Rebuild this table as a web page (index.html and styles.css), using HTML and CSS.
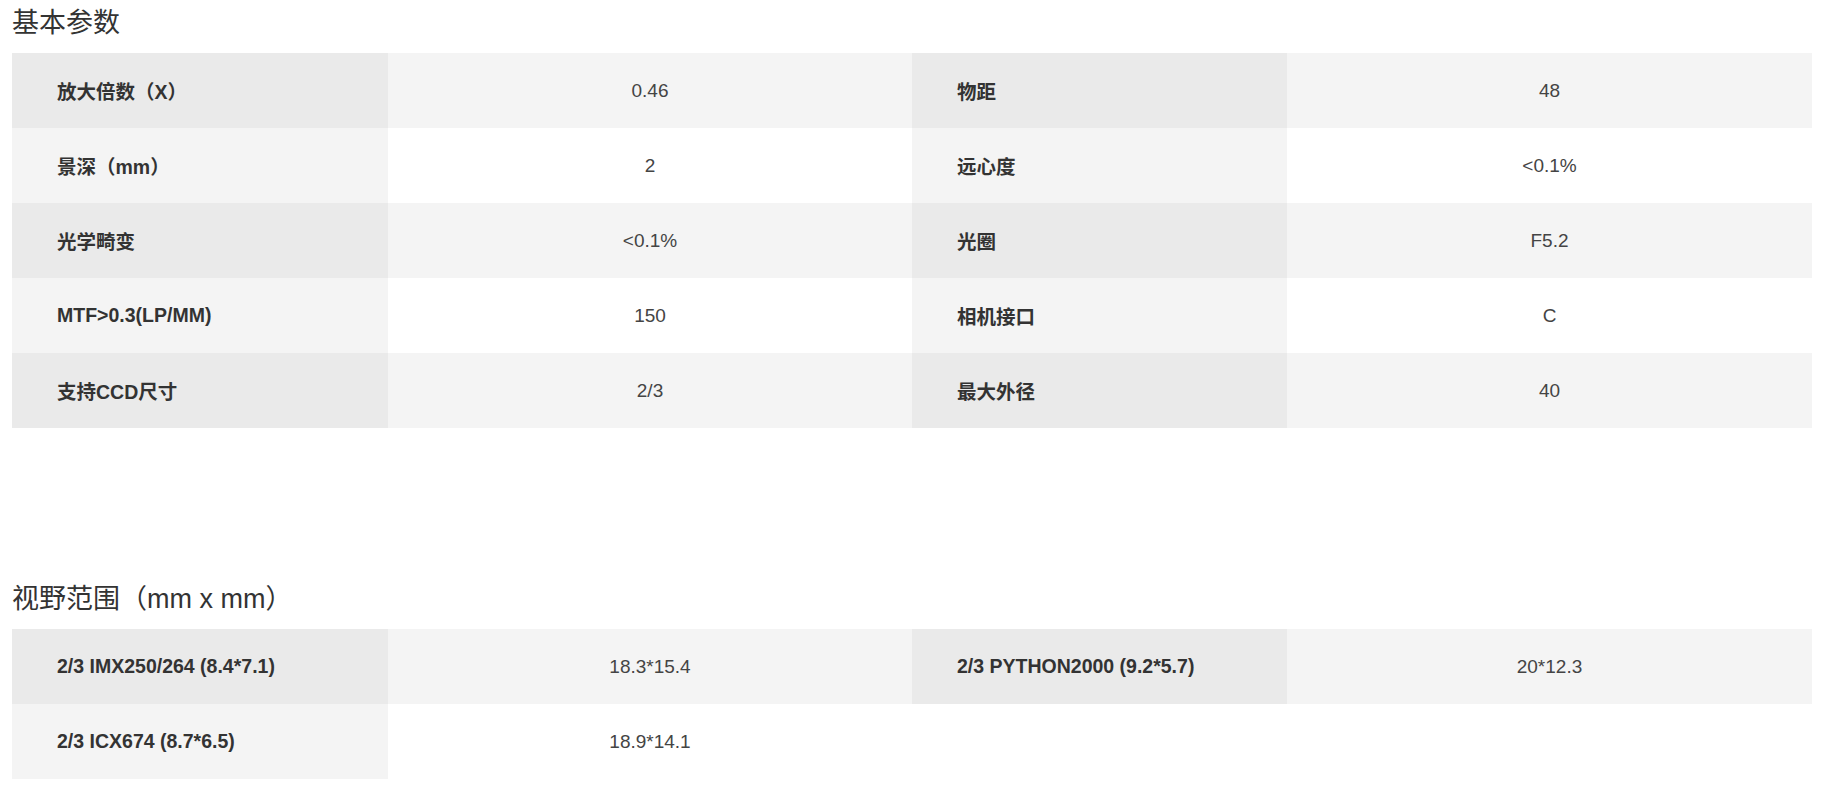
FILE: index.html
```html
<!DOCTYPE html>
<html lang="zh-CN">
<head>
<meta charset="utf-8">
<title>基本参数</title>
<link rel="stylesheet" href="styles.css">
</head>
<body>
<div class="page">
  <section class="block">
    <h2 class="block-title">基本参数</h2>
    <table class="spec">
      <colgroup><col class="c-label"><col class="c-value"><col class="c-label2"><col class="c-value2"></colgroup>
      <tbody>
        <tr><th>放大倍数（X）</th><td>0.46</td><th>物距</th><td>48</td></tr>
        <tr><th>景深（mm）</th><td>2</td><th>远心度</th><td>&lt;0.1%</td></tr>
        <tr><th>光学畸变</th><td>&lt;0.1%</td><th>光圈</th><td>F5.2</td></tr>
        <tr><th>MTF&gt;0.3(LP/MM)</th><td>150</td><th>相机接口</th><td>C</td></tr>
        <tr><th>支持CCD尺寸</th><td>2/3</td><th>最大外径</th><td>40</td></tr>
      </tbody>
    </table>
  </section>
  <section class="block block-second">
    <h2 class="block-title">视野范围（mm x mm）</h2>
    <table class="spec">
      <colgroup><col class="c-label"><col class="c-value"><col class="c-label2"><col class="c-value2"></colgroup>
      <tbody>
        <tr><th>2/3 IMX250/264 (8.4*7.1)</th><td>18.3*15.4</td><th>2/3 PYTHON2000 (9.2*5.7)</th><td>20*12.3</td></tr>
        <tr><th>2/3 ICX674 (8.7*6.5)</th><td>18.9*14.1</td><td class="empty"></td><td class="empty"></td></tr>
      </tbody>
    </table>
  </section>
</div>
</body>
</html>
```

FILE: styles.css
```css
html, body {
  margin: 0;
  padding: 0;
  background: #ffffff;
}

body {
  font-family: "Liberation Sans", Arial, "Noto Sans CJK SC", sans-serif;
  color: #333333;
}

.page {
  padding: 0 12px;
}

.block-title {
  margin: 0 0 10px 0;
  padding-top: 3px;
  font-size: 27px;
  line-height: 40px;
  font-weight: normal;
  color: #333333;
}

.block-second {
  margin-top: 148px;
}

.spec {
  width: 1800px;
  border-collapse: collapse;
  border-spacing: 0;
  table-layout: fixed;
}

.c-label { width: 376px; }
.c-value { width: 524px; }
.c-label2 { width: 375px; }
.c-value2 { width: 525px; }

.spec th,
.spec td {
  height: 75px;
  padding: 0;
  font-size: 19px;
  vertical-align: middle;
}

.spec th {
  text-align: left;
  padding-left: 45px;
  font-size: 19.5px;
  font-weight: bold;
  color: #333333;
}

.spec td {
  text-align: center;
  font-weight: normal;
  color: #444444;
}

.spec tr:nth-child(odd) th { background: #eaeaea; }
.spec tr:nth-child(odd) td { background: #f4f4f4; }
.spec tr:nth-child(even) th { background: #f4f4f4; }
.spec tr:nth-child(even) td { background: #ffffff; }
.spec tr:nth-child(even) td.empty { background: #ffffff; }
```
